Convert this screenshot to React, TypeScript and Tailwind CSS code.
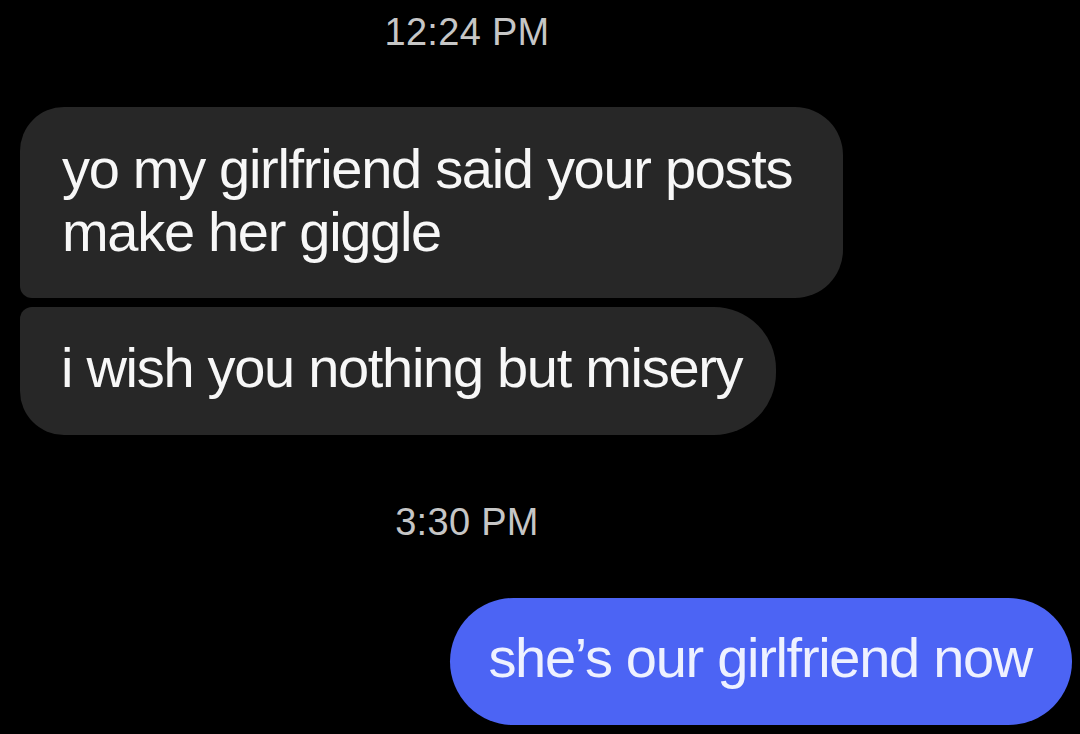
const Timestamp = ({ time, className }: { time: string; className: string }) => {
  return (
    <div className={`flex justify-center pr-[146px] ${className}`}>
      <span className="text-[38px] leading-[38px] tracking-[0.3px] text-[#c6c6c6]">{time}</span>
    </div>
  )
}

const App = () => {
  return (
    <div className="w-[1080px] h-[734px] overflow-hidden bg-black text-[56px] leading-[63px] tracking-[-1.3px] font-['Liberation_Sans',Arial,sans-serif]">
      <Timestamp time="12:24 PM" className="pt-[13px]" />

      <div className="mt-[56px] pl-[20px] flex flex-col gap-[9px]">
        <div className="w-[823px] bg-[#272727] text-[#f7f7f7] pl-[42px] pr-[30px] pt-[30px] pb-[35px] rounded-tl-[44px] rounded-tr-[48px] rounded-br-[48px] rounded-bl-[12px]">
          yo my girlfriend said your posts make her giggle
        </div>
        <div className="w-[756px] bg-[#272727] text-[#f7f7f7] pl-[41px] pr-[30px] pt-[29px] pb-[36px] rounded-tl-[12px] rounded-tr-[62px] rounded-br-[62px] rounded-bl-[44px]">
          i wish you nothing but misery
        </div>
      </div>

      <Timestamp time="3:30 PM" className="mt-[68px]" />

      <div className="mt-[57px] flex justify-end pr-[8px]">
        <div className="bg-[#4c64f4] text-[#eef1ff] pl-[38px] pr-[40px] pt-[28px] pb-[36px] rounded-full">
          she’s our girlfriend now
        </div>
      </div>
    </div>
  )
}

export default App
